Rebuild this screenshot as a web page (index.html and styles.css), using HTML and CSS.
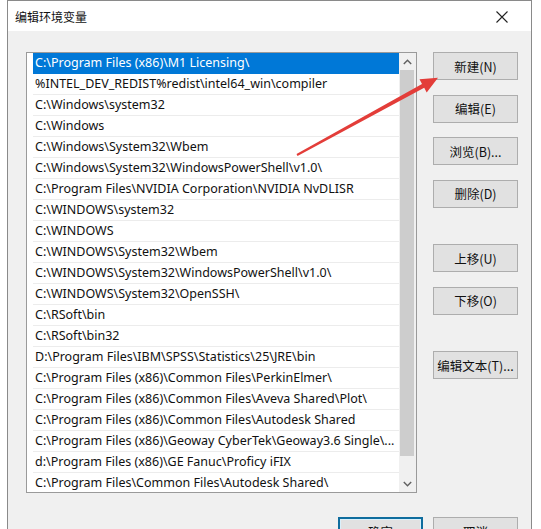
FILE: index.html
```html
<!DOCTYPE html>
<html lang="zh-CN">
<head>
<meta charset="utf-8">
<title>编辑环境变量</title>
<link rel="stylesheet" href="styles.css">
</head>
<body>
<div class="page">
  <div class="dialog">
    <div class="titlebar">
      <span class="title">编辑环境变量</span>
      <span class="close">
        <svg width="12" height="12" viewBox="0 0 12 12"><path d="M0.5 0.5 L11.5 11.5 M11.5 0.5 L0.5 11.5" stroke="#222" stroke-width="1.1" fill="none"/></svg>
      </span>
    </div>
    <div class="content">
      <div class="main">
        <div class="listbox">
          <div class="rows">
            <div class="row selected">C:\Program Files (x86)\M1 Licensing\</div>
            <div class="row">%INTEL_DEV_REDIST%redist\intel64_win\compiler</div>
            <div class="row">C:\Windows\system32</div>
            <div class="row">C:\Windows</div>
            <div class="row">C:\Windows\System32\Wbem</div>
            <div class="row">C:\Windows\System32\WindowsPowerShell\v1.0\</div>
            <div class="row">C:\Program Files\NVIDIA Corporation\NVIDIA NvDLISR</div>
            <div class="row">C:\WINDOWS\system32</div>
            <div class="row">C:\WINDOWS</div>
            <div class="row">C:\WINDOWS\System32\Wbem</div>
            <div class="row">C:\WINDOWS\System32\WindowsPowerShell\v1.0\</div>
            <div class="row">C:\WINDOWS\System32\OpenSSH\</div>
            <div class="row">C:\RSoft\bin</div>
            <div class="row">C:\RSoft\bin32</div>
            <div class="row">D:\Program Files\IBM\SPSS\Statistics\25\JRE\bin</div>
            <div class="row">C:\Program Files (x86)\Common Files\PerkinElmer\</div>
            <div class="row">C:\Program Files (x86)\Common Files\Aveva Shared\Plot\</div>
            <div class="row">C:\Program Files (x86)\Common Files\Autodesk Shared</div>
            <div class="row">C:\Program Files (x86)\Geoway CyberTek\Geoway3.6 Single\...</div>
            <div class="row">d:\Program Files (x86)\GE Fanuc\Proficy iFIX</div>
            <div class="row last">C:\Program Files\Common Files\Autodesk Shared\</div>
          </div>
          <div class="scrollbar">
            <div class="sb-btn">
              <svg width="9" height="6" viewBox="0 0 9 6"><path d="M0.8 5 L4.5 1.2 L8.2 5" stroke="#606060" stroke-width="1.4" fill="none"/></svg>
            </div>
            <div class="sb-thumb"></div>
            <div class="sb-track"></div>
            <div class="sb-btn">
              <svg width="9" height="6" viewBox="0 0 9 6"><path d="M0.8 1 L4.5 4.8 L8.2 1" stroke="#606060" stroke-width="1.4" fill="none"/></svg>
            </div>
          </div>
        </div>
        <div class="buttons">
          <div class="group">
            <button class="btn">新建(N)</button>
            <button class="btn">编辑(E)</button>
            <button class="btn">浏览(B)...</button>
            <button class="btn">删除(D)</button>
          </div>
          <div class="group">
            <button class="btn">上移(U)</button>
            <button class="btn">下移(O)</button>
          </div>
          <div class="group">
            <button class="btn">编辑文本(T)...</button>
          </div>
        </div>
      </div>
      <div class="footer">
        <button class="btn default">确定</button>
        <button class="btn">取消</button>
      </div>
    </div>
  </div>
  <svg class="arrow" width="541" height="529" viewBox="0 0 541 529">
    <polygon points="438,77.7 426.7,92.4 424.2,87.7 297.5,155.9 296.5,154.1 422,83.9 419.5,79.2" fill="#e33d39"/>
  </svg>
</div>
</body>
</html>
```
FILE: styles.css
```css
html, body {
  margin: 0;
  padding: 0;
  background: #ffffff;
  overflow: hidden;
}
body {
  font-family: "Noto Sans", "Noto Sans CJK SC", sans-serif;
  color: #000;
}
.page {
  position: relative;
  width: 541px;
  height: 529px;
  overflow: hidden;
  padding-left: 7px;
  box-sizing: border-box;
}
.dialog {
  width: 525px;
  height: 560px;
  border: 1px solid #8a8a8a;
  border-bottom: none;
  box-sizing: border-box;
  background: #f0f0f0;
}
.titlebar {
  height: 30px;
  background: #fff;
  display: flex;
  align-items: center;
  justify-content: space-between;
  padding: 0 23px 0 7px;
}
.title {
  font-family: "Noto Sans CJK SC", sans-serif;
  font-size: 12px;
  color: #111;
}
.close {
  display: flex;
  margin-top: 1px;
}
.content {
  padding: 21px 13px 0 18px;
}
.main {
  display: flex;
  gap: 16px;
}
.listbox {
  width: 391px;
  height: 441px;
  box-sizing: border-box;
  border: 1px solid #9a9a9a;
  background: #fff;
  display: flex;
}
.rows {
  flex: 1;
  padding-left: 6px;
  min-width: 0;
}
.row {
  height: 21px;
  line-height: 20px;
  box-sizing: border-box;
  border-bottom: 1px solid #ececec;
  padding-left: 2px;
  font-size: 12.5px;
  white-space: nowrap;
  overflow: hidden;
  text-overflow: ellipsis;
  color: #111;
}
.row.last {
  border-bottom: none;
}
.row.selected {
  background: #0078d7;
  color: #fff;
  border-bottom-color: #0078d7;
}
.scrollbar {
  width: 17px;
  background: #f0f0f0;
  display: flex;
  flex-direction: column;
}
.sb-btn {
  height: 17px;
  display: flex;
  align-items: center;
  justify-content: center;
}
.sb-thumb {
  height: 386px;
  margin: 0 2px 0 1px;
  background: #cdcdcd;
}
.sb-track {
  flex: 1;
}
.buttons {
  display: flex;
  flex-direction: column;
  gap: 36.5px;
}
.group {
  display: flex;
  flex-direction: column;
  gap: 14.5px;
}
.btn {
  width: 85px;
  height: 28px;
  box-sizing: border-box;
  border: 1px solid #adadad;
  background: #e1e1e1;
  font-family: "Noto Sans CJK SC", sans-serif;
  font-size: 12.5px;
  color: #111;
  padding: 0;
  margin: 0;
}
.footer {
  display: flex;
  justify-content: flex-end;
  gap: 10px;
  margin-top: 24px;
}
.btn.default {
  border: 2px solid #0f6d9e;
  background: #e1e1e1;
  box-shadow: inset 0 0 0 1px #d9f0fb;
}
.arrow {
  position: absolute;
  left: 0;
  top: 0;
  pointer-events: none;
}
```
